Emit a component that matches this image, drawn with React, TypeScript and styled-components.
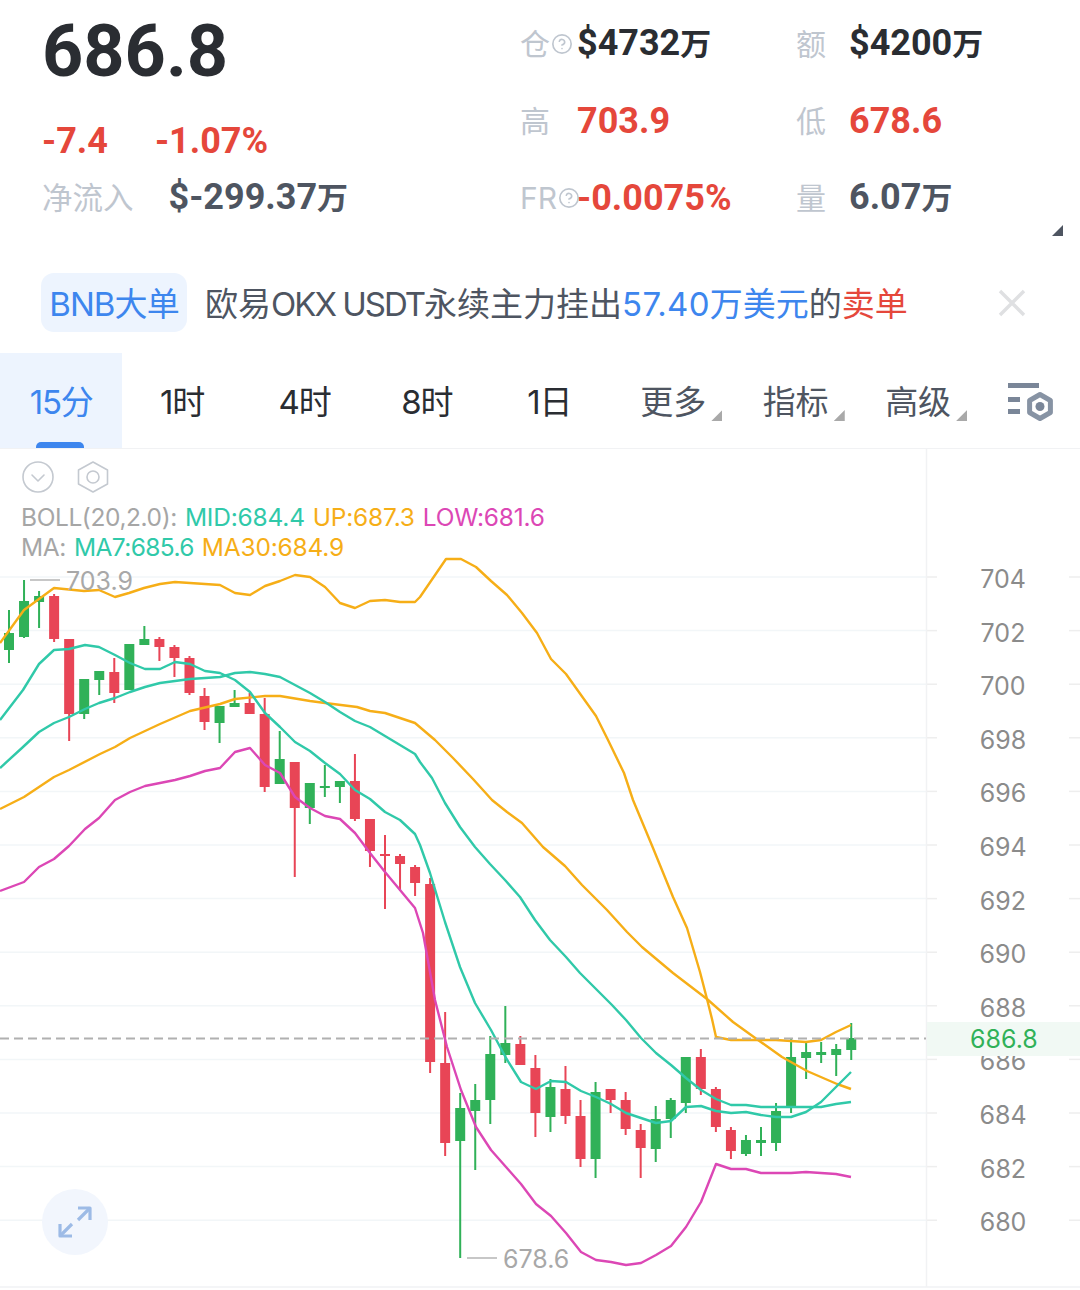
import React from 'react';
import styled, { createGlobalStyle } from 'styled-components';
import { CircleHelp } from 'lucide-react';

const GlobalStyle = createGlobalStyle`
    html, body {
        margin: 0;
        background: #fff;
    }
    #root {
        width: 1080px;
        height: 1290px;
        overflow: hidden;
    }
`;

const NUM_FONT = `Roboto, "Noto Sans CJK SC", sans-serif`;
const UI_FONT = `Inter, "Noto Sans CJK SC", sans-serif`;

const RED = '#e5473b';
const DARK = '#2a2d32';
const SLATE = '#4e5561';
const LABEL = '#bfc6cf';
const BLUE = '#3d86ee';
const CANDLE_RED = '#e84556';
const CANDLE_GREEN = '#30b158';
const TEAL = '#30c9a9';
const ORANGE = '#f6ae17';
const MAGENTA = '#dc47b5';

const Page = styled.div`
    width: 1080px;
    height: 1290px;
    background: #fff;
    display: flex;
    flex-direction: column;
`;

const Header = styled.header`
    position: relative;
    height: 273px;
    display: flex;
    flex: none;
`;

const Summary = styled.div`
    width: 520px;
    padding-left: 42px;
    box-sizing: border-box;
    flex: none;
`;

const Price = styled.div`
    height: 100px;
    font: 700 72px/103px ${NUM_FONT};
    color: ${DARK};
`;

const ChangeRow = styled.div`
    margin-top: 13px;
    height: 56px;
    display: flex;
    align-items: center;
    gap: 47px;
    font: 700 36px/58px ${NUM_FONT};
    color: ${RED};
`;

const FlowRow = styled.div`
    height: 58px;
    display: flex;
    align-items: center;
    gap: 35px;
`;

const FlowLabel = styled.span`
    font: 400 30.5px/58px ${UI_FONT};
    color: ${LABEL};
`;

const Stats = styled.div`
    padding-top: 5px;
    display: grid;
    grid-template-columns: 276px 1fr;
    grid-auto-rows: 77px;
`;

const Stat = styled.div`
    display: flex;
    align-items: center;
`;

const StatLabel = styled.span`
    width: ${({ $wide }: { $wide?: boolean }) => ($wide ? 57 : 53)}px;
    flex: none;
    display: flex;
    align-items: center;
    font: 400 30px/40px ${UI_FONT};
    color: ${LABEL};
    svg {
        flex: none;
        margin-left: 1px;
    }
`;

const Value = styled.span<{ $tone: 'dark' | 'slate' | 'red' }>`
    font: 700 36px/44px ${NUM_FONT};
    color: ${({ $tone }) => ($tone === 'dark' ? DARK : $tone === 'slate' ? SLATE : RED)};
    white-space: nowrap;
`;

const Unit = styled.span`
    font-size: 31px;
`;

const CornerCaret = styled.i<{ $size: number; $color: string }>`
    position: absolute;
    width: ${({ $size }) => $size}px;
    height: ${({ $size }) => $size}px;
    background: ${({ $color }) => $color};
    clip-path: polygon(100% 0, 100% 100%, 0 100%);
`;

const HeaderCaret = styled(CornerCaret)`
    right: 17px;
    top: 225px;
`;

const Alert = styled.div`
    height: 80px;
    flex: none;
    box-sizing: border-box;
    padding: 0 54px 21px 41px;
    display: flex;
    align-items: center;
    font: 400 33px/59px ${UI_FONT};
    color: ${SLATE};
    white-space: nowrap;
`;

const Chip = styled.span`
    width: 146px;
    height: 59px;
    flex: none;
    border-radius: 13px;
    background: #edf4fe;
    color: ${BLUE};
    text-align: center;
    letter-spacing: -0.9px;
    line-height: 62px;
    margin-right: 18px;
`;

const AlertText = styled.span`
    line-height: 62px;
    padding-top: 3px;
`;

const Latin = styled.span`
    letter-spacing: -2px;
`;

const Blue = styled.span`
    color: ${BLUE};
`;

const BlueDigits = styled.span`
    letter-spacing: 0.3px;
`;

const Red = styled.span`
    color: ${RED};
`;

const CloseIcon = styled.svg`
    margin-left: auto;
    flex: none;
`;

const Tabs = styled.nav`
    height: 96px;
    flex: none;
    display: flex;
    box-sizing: border-box;
    border-bottom: 1px solid #f1f2f4;
`;

const Tab = styled.div<{ $active?: boolean; $muted?: boolean }>`
    position: relative;
    width: 122.4px;
    flex: none;
    box-sizing: border-box;
    padding-right: ${({ $active, $muted }) => ($active || $muted ? 0 : 3)}px;
    text-align: center;
    font: 400 33px/98px ${UI_FONT};
    letter-spacing: ${({ $muted }) => ($muted ? '-0.2px' : '-1.2px')};
    color: ${({ $active, $muted }) => ($active ? BLUE : $muted ? SLATE : DARK)};
    background: ${({ $active }) => ($active ? '#edf4fe' : 'transparent')};
`;

const TabMarker = styled.i`
    position: absolute;
    left: 36px;
    bottom: 0;
    width: 48px;
    height: 6px;
    border-radius: 5px 5px 0 0;
    background: ${BLUE};
`;

const TabCaret = styled(CornerCaret)`
    right: 12px;
    top: 57px;
`;

const SettingsTab = styled.div`
    flex: 1;
    display: flex;
    align-items: flex-start;
    padding: 30px 0 0 29px;
`;

const Chart = styled.section`
    position: relative;
    flex: 1;
`;

const ChartSvg = styled.svg`
    position: absolute;
    inset: 0;
    display: block;
`;

const AxisText = styled.text`
    font: 400 25px ${UI_FONT};
    fill: #8b8b8b;
    text-anchor: middle;
`;

const ExtremeText = styled.text`
    font: 400 25px ${UI_FONT};
    fill: #a8a8a8;
`;

const Overlay = styled.div`
    position: absolute;
    left: 21px;
    top: 12px;
`;

const ChartTools = styled.div`
    display: flex;
    gap: 23px;
    height: 32px;
    margin: 0 0 9px 1px;
`;

const Legend = styled.div`
    display: flex;
    gap: 8px;
    font: 400 24.5px/30px ${UI_FONT};
    letter-spacing: -0.2px;
    white-space: nowrap;
    color: #a6a6a6;
`;

const LegendName = styled.span`
    letter-spacing: -0.4px;
`;

const LegendItem = styled.span<{ $color: string; $tight?: boolean }>`
    color: ${({ $color }) => $color};
    letter-spacing: ${({ $tight }) => ($tight ? '-0.6px' : '-0.2px')};
`;

const PriceTag = styled.div`
    position: absolute;
    left: 927px;
    right: 0;
    top: 573px;
    height: 34px;
    padding-left: 43px;
    box-sizing: border-box;
    background: #f1f9f4;
    color: ${CANDLE_GREEN};
    font: 400 25px/34px ${UI_FONT};
`;

const ExpandButton = styled.div`
    position: absolute;
    left: 42px;
    top: 740px;
    width: 66px;
    height: 66px;
    border-radius: 50%;
    background: #f2f6fd;
    display: flex;
    align-items: center;
    justify-content: center;
`;

// wick top, body top, body bottom, wick bottom, up
type Candle = [number, number, number, number, 0 | 1];

const CANDLES: Candle[] = [
    [610, 633, 650, 663, 1], [580, 601, 637, 638, 1], [591, 596, 602, 628, 1], [594, 596, 639, 642, 0],
    [639, 639, 714, 741, 0], [679, 679, 714, 719, 1], [671, 671, 680, 695, 1], [658, 672, 693, 703, 0],
    [644, 644, 690, 690, 1], [626, 639, 645, 645, 1], [637, 639, 647, 661, 0], [645, 647, 658, 677, 0],
    [656, 658, 693, 695, 0], [688, 696, 722, 730, 0], [706, 706, 723, 743, 1], [690, 703, 707, 707, 1],
    [693, 703, 714, 714, 0], [698, 714, 787, 792, 0], [731, 759, 784, 784, 1], [762, 762, 808, 877, 0],
    [783, 783, 808, 824, 1], [765, 786, 788, 797, 1], [781, 781, 787, 803, 1], [754, 781, 819, 821, 0],
    [819, 819, 851, 867, 0], [835, 854, 856, 909, 0], [854, 856, 864, 891, 0], [865, 867, 883, 896, 0],
    [878, 884, 1062, 1073, 0], [1012, 1063, 1143, 1156, 0], [1093, 1108, 1141, 1258, 1], [1084, 1100, 1111, 1170, 1],
    [1036, 1054, 1100, 1124, 1], [1006, 1043, 1055, 1063, 1], [1036, 1044, 1065, 1065, 0], [1055, 1068, 1113, 1137, 0],
    [1079, 1087, 1117, 1132, 1], [1066, 1089, 1116, 1124, 0], [1100, 1116, 1159, 1167, 0], [1082, 1092, 1159, 1178, 1],
    [1089, 1089, 1100, 1113, 0], [1092, 1100, 1129, 1135, 0], [1124, 1130, 1148, 1178, 0], [1106, 1119, 1149, 1162, 1],
    [1098, 1100, 1119, 1138, 1], [1057, 1057, 1103, 1113, 1], [1049, 1057, 1089, 1095, 0], [1087, 1089, 1127, 1132, 0],
    [1127, 1130, 1151, 1159, 0], [1135, 1140, 1154, 1156, 1], [1127, 1140, 1143, 1156, 1], [1103, 1111, 1143, 1151, 1],
    [1039, 1057, 1108, 1113, 1], [1042, 1052, 1058, 1079, 1], [1042, 1052, 1055, 1063, 1], [1044, 1049, 1055, 1076, 1],
    [1023, 1038, 1050, 1060, 1],
];

const BOLL_UP =
    '0,643 24,610 54,588 84,591 99,590 115,597 129,593 144,588 160,584 175,582 190,583 205,584 220,585 235,593 250,595 265,586 280,581 295,575 310,577 325,587 340,603 355,608 370,601 385,600 400,602 415,602 420,597 446,559 461,559 476,567 491,581 507,595 522,613 537,633 551,659 566,674 581,695 596,716 608,740 624,773 633,800 653,848 673,897 687,928 700,972 707,999 712,1019 716,1037 731,1040 746,1040 761,1040 776,1040 791,1041 806,1042 821,1040 836,1032 851,1025';
const MA30 =
    '0,809 24,797 54,777 69,770 100,754 115,747 130,738 160,724 190,711 220,704 235,699 265,696 280,696 310,701 325,703 357,707 370,711 385,713 400,718 415,723 435,740 453,758 473,779 492,800 507,812 522,823 543,847 565,866 582,885 607,910 627,932 642,947 673,973 707,999 733,1022 758,1040 782,1057 807,1071 837,1084 851,1089';
const BOLL_MID =
    '0,720 23,690 39,664 54,650 69,649 85,645 99,647 115,655 130,663 145,669 160,669 175,662 190,664 205,671 220,673 235,680 250,692 265,713 280,727 295,742 310,751 325,763 340,774 355,790 370,799 385,812 400,820 415,834 420,845 430,873 445,922 460,967 475,1003 491,1030 506,1058 521,1082 536,1089 551,1081 566,1082 581,1091 596,1097 611,1104 626,1113 641,1118 656,1123 671,1121 686,1107 701,1106 716,1111 731,1113 746,1112 761,1115 776,1117 791,1117 806,1112 821,1102 836,1087 851,1072';
const MA7 =
    '0,768 23,747 39,732 54,723 69,717 85,709 99,703 115,698 130,692 145,687 160,683 175,681 190,679 205,678 220,677 235,673 250,672 265,674 280,677 295,685 310,693 325,702 340,712 355,721 370,727 385,736 400,745 415,754 420,762 432,778 445,803 460,827 475,847 490,864 505,880 520,897 535,920 550,940 566,957 580,973 595,988 612,1005 626,1020 641,1038 656,1053 671,1065 686,1078 701,1090 716,1099 731,1105 746,1105 761,1107 791,1107 821,1107 836,1104 851,1102';
const BOLL_LOW =
    '0,891 24,882 39,867 54,859 69,846 85,829 99,818 115,800 130,792 145,786 160,783 175,780 190,776 205,771 220,768 235,752 250,748 265,765 280,773 295,797 310,808 325,816 340,819 355,833 370,853 385,872 400,890 415,908 423,933 435,1000 447,1047 461,1090 476,1127 491,1150 506,1167 521,1184 536,1204 551,1216 566,1233 581,1252 596,1260 611,1262 626,1265 641,1263 656,1255 671,1246 686,1227 701,1202 716,1164 731,1169 746,1169 761,1173 791,1173 806,1172 836,1174 851,1177';

const GRID_PRICES = [704, 702, 700, 698, 696, 694, 692, 690, 688, 686, 684, 682, 680];
const gridY = (i: number) => 577 + i * 53.6;
const candleX = (i: number) => 9 + i * 15.04;

const CandleMark = ({ candle, index }: { candle: Candle; index: number }) => {
    const [wickTop, bodyTop, bodyBottom, wickBottom, up] = candle;
    const x = candleX(index);
    const color = up ? CANDLE_GREEN : CANDLE_RED;
    return (
        <g fill={color}>
            <rect x={x - 1} y={wickTop} width={2} height={wickBottom - wickTop} />
            <rect x={x - 5} y={bodyTop} width={10} height={Math.max(bodyBottom - bodyTop, 2)} />
        </g>
    );
};

const CandleChart = () => (
    <ChartSvg width={1080} height={841} viewBox="0 449 1080 841">
        {GRID_PRICES.map((price, i) => (
            <g key={price}>
                <line x1={0} x2={926} y1={gridY(i)} y2={gridY(i)} stroke="#f2f6f8" strokeWidth={1.5} />
                <line x1={926} x2={937} y1={gridY(i)} y2={gridY(i)} stroke="#eeeeee" strokeWidth={1.5} />
                <line x1={1069} x2={1080} y1={gridY(i)} y2={gridY(i)} stroke="#eeeeee" strokeWidth={1.5} />
                <AxisText x={1003} y={gridY(i) + 11}>
                    {price}
                </AxisText>
            </g>
        ))}
        <line x1={926.5} x2={926.5} y1={449} y2={1287} stroke="#f1f2f4" strokeWidth={1.5} />
        <line x1={0} x2={1080} y1={1287} y2={1287} stroke="#f1f2f4" strokeWidth={1.5} />

        {CANDLES.map((candle, i) => (
            <CandleMark key={i} candle={candle} index={i} />
        ))}

        <g fill="none" strokeWidth={2.4} strokeLinejoin="round">
            <polyline points={BOLL_UP} stroke={ORANGE} />
            <polyline points={MA30} stroke={ORANGE} />
            <polyline points={BOLL_MID} stroke={TEAL} />
            <polyline points={MA7} stroke={TEAL} />
            <polyline points={BOLL_LOW} stroke={MAGENTA} />
        </g>

        <line x1={0} x2={926} y1={1038.5} y2={1038.5} stroke="#b0b0b0" strokeWidth={2} strokeDasharray="9 5" />

        <line x1={30} x2={60} y1={580} y2={580} stroke="#b5b5b5" strokeWidth={1.5} />
        <ExtremeText x={66} y={590}>
            703.9
        </ExtremeText>
        <line x1={467} x2={497} y1={1258} y2={1258} stroke="#b5b5b5" strokeWidth={1.5} />
        <ExtremeText x={503} y={1268}>
            678.6
        </ExtremeText>
    </ChartSvg>
);

const DropdownIcon = () => (
    <svg width={32} height={32} viewBox="0 0 32 32" fill="none" stroke="#c4c9d0" strokeWidth={1.6}>
        <circle cx={16} cy={16} r={15} />
        <path d="M10 14l6 6 6-6" strokeLinecap="round" strokeLinejoin="round" />
    </svg>
);

const HexIcon = () => (
    <svg width={32} height={32} viewBox="0 0 32 32" fill="none" stroke="#c4c9d0" strokeWidth={1.6}>
        <path d="M16 1l14.5 8v14L16 31 1.5 23V9z" strokeLinejoin="round" />
        <circle cx={16} cy={16} r={6} />
    </svg>
);

const SettingsIcon = () => (
    <svg width={46} height={38} viewBox="0 0 46 38" fill="none">
        <rect x={0} y={0} width={31} height={5} fill="#7a8698" />
        <rect x={0} y={14} width={12} height={5} fill="#7a8698" />
        <rect x={0} y={26} width={12} height={5} fill="#7a8698" />
        <path d="M32 11.5l10.4 6v12L32 35.5l-10.4-6v-12z" stroke="#8793a4" strokeWidth={5} strokeLinejoin="round" />
        <circle cx={32} cy={23.5} r={4.5} fill="#7a8698" />
    </svg>
);

const ExpandIcon = () => (
    <svg width={34} height={34} viewBox="0 0 34 34" fill="none" stroke="#9dbbe6" strokeWidth={3.2}>
        <path d="M20 3h12v12" strokeLinejoin="round" />
        <path d="M32 3L20 15" />
        <path d="M2 19v12h12" strokeLinejoin="round" />
        <path d="M2 31l12-12" />
    </svg>
);

const HelpMark = ({ size }: { size: number }) => <CircleHelp size={size} strokeWidth={1.8} color={LABEL} />;

const TIMEFRAMES = ['1时', '4时', '8时', '1日'];
const MENUS = ['更多', '指标', '高级'];

export default function App() {
    return (
        <Page>
            <GlobalStyle />
            <Header>
                <Summary>
                    <Price>686.8</Price>
                    <ChangeRow>
                        <span>-7.4</span>
                        <span>-1.07%</span>
                    </ChangeRow>
                    <FlowRow>
                        <FlowLabel>净流入</FlowLabel>
                        <Value $tone="slate">
                            $-299.37<Unit>万</Unit>
                        </Value>
                    </FlowRow>
                </Summary>
                <Stats>
                    <Stat>
                        <StatLabel $wide>
                            仓
                            <HelpMark size={22} />
                        </StatLabel>
                        <Value $tone="dark">
                            $4732<Unit>万</Unit>
                        </Value>
                    </Stat>
                    <Stat>
                        <StatLabel>额</StatLabel>
                        <Value $tone="dark">
                            $4200<Unit>万</Unit>
                        </Value>
                    </Stat>
                    <Stat>
                        <StatLabel $wide>高</StatLabel>
                        <Value $tone="red">703.9</Value>
                    </Stat>
                    <Stat>
                        <StatLabel>低</StatLabel>
                        <Value $tone="red">678.6</Value>
                    </Stat>
                    <Stat>
                        <StatLabel $wide>
                            FR
                            <HelpMark size={22} />
                        </StatLabel>
                        <Value $tone="red">-0.0075%</Value>
                    </Stat>
                    <Stat>
                        <StatLabel>量</StatLabel>
                        <Value $tone="slate">
                            6.07<Unit>万</Unit>
                        </Value>
                    </Stat>
                </Stats>
                <HeaderCaret $size={11} $color="#4e5561" />
            </Header>

            <Alert>
                <Chip>BNB大单</Chip>
                <AlertText>
                    欧易<Latin>OKX USDT</Latin>永续主力挂出
                    <Blue>
                        <BlueDigits>57.40</BlueDigits>万美元
                    </Blue>
                    的<Red>卖单</Red>
                </AlertText>
                <CloseIcon width={28} height={28} viewBox="0 0 28 28" stroke="#dfe0e2" strokeWidth={3.4}>
                    <path d="M2 2l24 24M26 2L2 26" />
                </CloseIcon>
            </Alert>

            <Tabs>
                <Tab $active>
                    15分
                    <TabMarker />
                </Tab>
                {TIMEFRAMES.map(label => (
                    <Tab key={label}>{label}</Tab>
                ))}
                {MENUS.map(label => (
                    <Tab key={label} $muted>
                        {label}
                        <TabCaret $size={11} $color="#a9a9a9" />
                    </Tab>
                ))}
                <SettingsTab>
                    <SettingsIcon />
                </SettingsTab>
            </Tabs>

            <Chart>
                <CandleChart />
                <Overlay>
                    <ChartTools>
                        <DropdownIcon />
                        <HexIcon />
                    </ChartTools>
                    <Legend>
                        <LegendName>BOLL(20,2.0):</LegendName>
                        <LegendItem $color={TEAL}>MID:684.4</LegendItem>
                        <LegendItem $color={ORANGE}>UP:687.3</LegendItem>
                        <LegendItem $color={MAGENTA}>LOW:681.6</LegendItem>
                    </Legend>
                    <Legend>
                        <LegendName>MA:</LegendName>
                        <LegendItem $color={TEAL} $tight>
                            MA7:685.6
                        </LegendItem>
                        <LegendItem $color={ORANGE}>MA30:684.9</LegendItem>
                    </Legend>
                </Overlay>
                <PriceTag>686.8</PriceTag>
                <ExpandButton>
                    <ExpandIcon />
                </ExpandButton>
            </Chart>
        </Page>
    );
}
